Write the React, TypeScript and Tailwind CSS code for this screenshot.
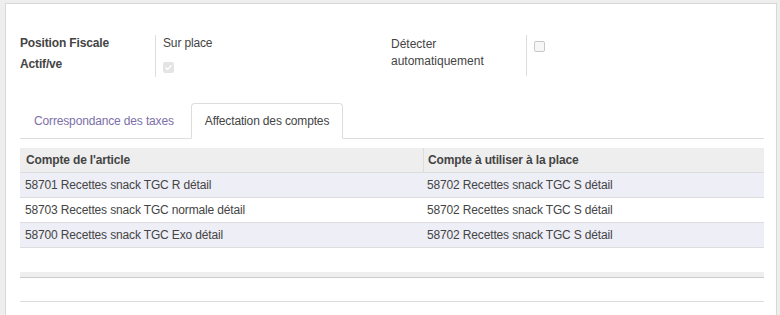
import React from "react";

const rows = [
  ["58701 Recettes snack TGC R détail", "58702 Recettes snack TGC S détail"],
  ["58703 Recettes snack TGC normale détail", "58702 Recettes snack TGC S détail"],
  ["58700 Recettes snack TGC Exo détail", "58702 Recettes snack TGC S détail"],
];

export default function App() {
  return (
    <div
      className="w-[780px] h-[315px] overflow-hidden bg-[#eeeeee] pt-[3px] pl-[5px] pr-[3px] text-[12px] tracking-[-0.15px] text-[#444444]"
      style={{ fontFamily: '"Liberation Sans", Arial, sans-serif' }}
    >
      <div className="h-[320px] bg-white border border-[#d8d8d8] pl-[14px] pr-[12px] pt-[31px]">
        {/* fields */}
        <div className="flex">
          <div className="w-[371px]">
            <div className="flex h-[21px] leading-[17px]">
              <div className="w-[136px] border-r border-[#dddddd] font-bold">Position Fiscale</div>
              <div className="pl-[7px]">Sur place</div>
            </div>
            <div className="flex h-[21px] leading-[17px]">
              <div className="w-[136px] border-r border-[#dddddd] font-bold">Actif/ve</div>
              <div className="pl-[7px] pt-[6px]">
                <div className="w-[11px] h-[11px] rounded-[2px] bg-[#e4e4e4] flex items-center justify-center">
                  <svg width="9" height="9" viewBox="0 0 9 9">
                    <path d="M1.5 4.6 L3.6 6.6 L7.5 2.3" fill="none" stroke="#ffffff" strokeWidth="1.4" />
                  </svg>
                </div>
              </div>
            </div>
          </div>
          <div className="flex">
            <div className="w-[136px] h-[41px] border-r border-[#dddddd] leading-[17px] pt-[1px] tracking-normal">
              Détecter
              <br />
              automatiquement
            </div>
            <div className="pl-[7px] pt-[6px]">
              <div className="w-[11px] h-[11px] rounded-[2px] border border-[#c8c8c8] bg-[#f7f7f7]" />
            </div>
          </div>
        </div>

        {/* tabs */}
        <div className="mt-[26px] flex border-b border-[#dddddd] h-[36px]">
          <div className="h-[36px] px-[14px] flex items-center whitespace-nowrap text-[#7c6fa8] mr-[3px]">
            Correspondance des taxes
          </div>
          <div className="h-[36px] px-[13px] flex items-center whitespace-nowrap border border-[#dddddd] border-b-white rounded-t-[4px] bg-white text-[#444444]">
            Affectation des comptes
          </div>
        </div>

        {/* table */}
        <div className="mt-[9px]">
          <div className="flex h-[25px] bg-[#eeeeee] border-b border-[#dddddd] font-bold">
            <div className="w-[403px] pl-[6px] flex items-center">Compte de l'article</div>
            <div className="flex-1 pl-[4px] flex items-center border-l border-[#dddddd]">
              Compte à utiliser à la place
            </div>
          </div>
          {rows.map((r, i) => (
            <div
              key={i}
              className={
                "flex h-[25px] border-b border-[#dddddd] " +
                (i % 2 === 0 ? "bg-[#eeeef6]" : "bg-white")
              }
            >
              <div className="w-[403px] pl-[5px] flex items-center">{r[0]}</div>
              <div className="flex-1 pl-[4px] flex items-center">{r[1]}</div>
            </div>
          ))}
          <div className="h-[24px]" />
          <div className="h-[6px] bg-[#eeeeee] border-b border-[#cccccc]" />
          <div className="h-[24px] border-b border-[#dddddd]" />
        </div>
      </div>
    </div>
  );
}
